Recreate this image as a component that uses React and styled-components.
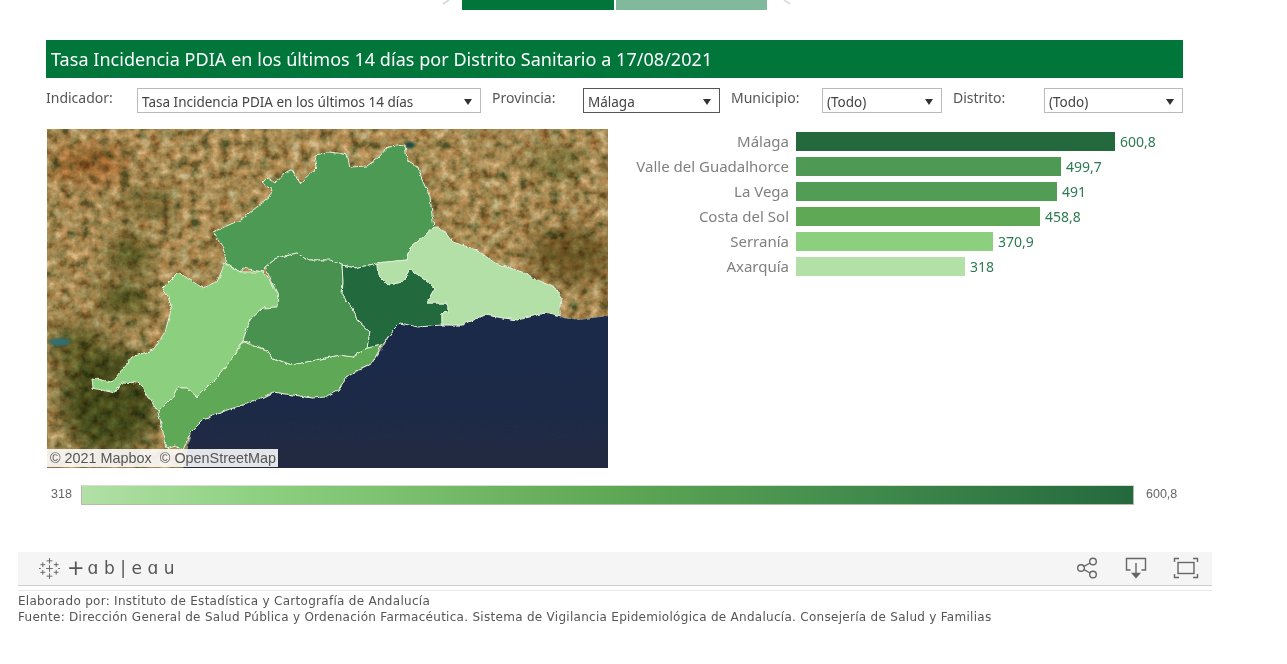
import React from "react";
import styled, { createGlobalStyle } from "styled-components";

const bars = [
  { name: "Málaga", value: "600,8", width: 319, color: "#24693d" },
  { name: "Valle del Guadalhorce", value: "499,7", width: 265, color: "#4e9a55" },
  { name: "La Vega", value: "491", width: 261, color: "#529d55" },
  { name: "Costa del Sol", value: "458,8", width: 244, color: "#5fa855" },
  { name: "Serranía", value: "370,9", width: 197, color: "#8bcf7f" },
  { name: "Axarquía", value: "318", width: 169, color: "#b2e0a6" },
];

const filters = [
  { label: "Indicador:", value: "Tasa Incidencia PDIA en los últimos 14 días", width: 344 },
  { label: "Provincia:", value: "Málaga", width: 137, active: true },
  { label: "Municipio:", value: "(Todo)", width: 120 },
  { label: "Distrito:", value: "(Todo)", width: 139 },
];

const regions = [
  {
    fill: "#4e9a55",
    d: "M213 232L240 220L270 197L272 190L262 183L267 178L275 183L285 172L292 170L300 183L317 167L315 155L328 152L338 153L347 155L350 167L367 166L378 158L388 147L405 145L407 160L418 167L423 182L430 197L432 215L434 227L422 238L411 247L407 260L377 263L355 268L342 265L325 260L307 260L297 253L277 258L265 267L263 272L243 268L240 272L227 263L223 248Z",
  },
  {
    fill: "#8bcf7f",
    d: "M162 288L178 272L190 280L203 288L217 282L225 263L240 272L263 272L273 285L278 295L277 307L263 308L250 320L243 340L232 358L222 372L197 397L187 388L177 388L173 397L158 412L143 388L138 383L122 382L115 393L93 388L92 378L112 382L132 357L153 350L165 332L172 307L167 295Z",
  },
  {
    fill: "#5fa855",
    d: "M243 342L267 350L273 358L292 365L325 358L340 355L353 357L367 348L382 345L372 363L357 370L347 377L338 390L325 397L313 398L273 392L253 402L227 410L203 420L190 433L183 450L175 445L167 448L158 412L173 397L177 388L187 388L197 397L222 372L232 358Z",
  },
  {
    fill: "#4a9150",
    d: "M243 340L250 320L263 308L277 307L278 295L273 285L265 267L277 258L297 253L307 260L330 260L342 265L343 282L342 295L353 308L357 320L370 332L367 348L353 357L340 355L325 358L292 365L273 358L267 350Z",
  },
  {
    fill: "#24693d",
    d: "M342 265L355 268L377 263L378 275L388 285L402 282L410 269L425 280L435 288L428 300L427 303L448 303L448 312L442 313L442 325L418 327L400 323L393 330L382 345L367 348L370 332L357 320L353 308L342 295L343 282Z",
  },
  {
    fill: "#b2e0a6",
    d: "M377 263L407 260L411 247L422 238L434 227L440 227L453 242L477 250L495 263L522 272L538 280L555 288L562 300L560 305L560 317L545 313L517 320L485 315L462 325L442 325L442 313L448 312L448 303L427 303L428 300L435 288L425 280L410 269L402 282L388 285L378 275Z",
  },
];

const seaPath =
  "M183 472L190 433L203 420L227 410L253 402L273 392L313 398L338 390L347 377L372 363L393 330L400 323L442 325L462 325L485 315L517 320L545 313L575 320L612 315L612 472Z";

const App = () => {
  return (
    <>
      <GlobalStyle />
      <Page>
        <TabRow>
          <Chevron viewBox="0 0 10 6">
            <path d="M8 0L2 4" />
          </Chevron>
          <Tab $color="#00763a" />
          <Tab $color="#80b99b" />
          <Chevron viewBox="0 0 10 6">
            <path d="M2 0L8 4" />
          </Chevron>
        </TabRow>
        <Dashboard>
          <Title>Tasa Incidencia PDIA en los últimos 14 días por Distrito Sanitario a 17/08/2021</Title>
          <FilterRow>
            {filters.map((f) => (
              <React.Fragment key={f.label}>
                <FilterLabel>{f.label}</FilterLabel>
                <Select $width={f.width} $active={f.active}>
                  <span>{f.value}</span>
                  <Caret />
                </Select>
              </React.Fragment>
            ))}
          </FilterRow>
          <Content>
            <MapFrame>
              <MapSvg viewBox="47 129 561 339">
                <defs>
                  <filter id="land" x="0" y="0" width="100%" height="100%" colorInterpolationFilters="sRGB">
                    <feTurbulence type="fractalNoise" baseFrequency="0.1" numOctaves="5" seed="11" />
                    <feColorMatrix values="1.25 0.5 0 0 -0.38 1.6 0.1 0 0 -0.35 1.7 0 0 0 -0.35 0 0 0 0 1" />
                    <feComponentTransfer>
                      <feFuncR type="table" tableValues="0.3 0.46 0.6 0.69 0.77 0.85" />
                      <feFuncG type="table" tableValues="0.32 0.41 0.5 0.56 0.63 0.73" />
                      <feFuncB type="table" tableValues="0.16 0.22 0.29 0.34 0.41 0.54" />
                    </feComponentTransfer>
                    <feGaussianBlur stdDeviation="0.6" />
                  </filter>
                  <filter id="soft" colorInterpolationFilters="sRGB">
                    <feGaussianBlur stdDeviation="10" />
                  </filter>
                  <filter id="edge">
                    <feGaussianBlur stdDeviation="1.2" />
                  </filter>
                  <filter id="wiggle" x="-5%" y="-5%" width="110%" height="110%">
                    <feTurbulence type="fractalNoise" baseFrequency="0.16" numOctaves="3" seed="4" />
                    <feDisplacementMap in="SourceGraphic" scale="4" xChannelSelector="R" yChannelSelector="G" />
                    <feGaussianBlur stdDeviation="0.35" />
                  </filter>
                  <linearGradient id="sea" x1="0" y1="0" x2="0" y2="1">
                    <stop offset="0" stopColor="#1b2b4b" />
                    <stop offset="1" stopColor="#212a42" />
                  </linearGradient>
                </defs>
                <rect x="47" y="129" width="561" height="339" filter="url(#land)" />
                <g filter="url(#soft)" style={{ mixBlendMode: "multiply" }}>
                  <ellipse cx="130" cy="255" rx="24" ry="16" fill="#7d9a5a" />
                  <ellipse cx="125" cy="300" rx="28" ry="16" fill="#7d9a5a" />
                  <ellipse cx="110" cy="400" rx="50" ry="55" fill="#6e8d52" />
                  <ellipse cx="75" cy="345" rx="26" ry="22" fill="#8ca268" />
                  <ellipse cx="150" cy="205" rx="32" ry="12" fill="#a4b080" />
                  <ellipse cx="570" cy="255" rx="42" ry="30" fill="#aaa678" />
                  <ellipse cx="90" cy="165" rx="40" ry="18" fill="#e8b888" />
                  <ellipse cx="555" cy="165" rx="26" ry="14" fill="#b0c8a0" />
                </g>
                <ellipse cx="60" cy="342" rx="11" ry="4" fill="#356e6e" filter="url(#edge)" />
                <ellipse cx="410" cy="145" rx="5" ry="3" fill="#1e4a44" filter="url(#edge)" />
                <g filter="url(#wiggle)">
                  <path d={seaPath} fill="url(#sea)" stroke="#8f9a92" strokeWidth="0.8" />
                  {regions.map((r) => (
                    <path key={r.fill} d={r.d} fill={r.fill} stroke="#e4efdc" strokeWidth="1" strokeLinejoin="round" />
                  ))}
                </g>
              </MapSvg>
              <Attribution>© 2021 Mapbox&nbsp; © OpenStreetMap</Attribution>
            </MapFrame>
            <Chart>
              {bars.map((b) => (
                <BarRow key={b.name}>
                  <BarName>{b.name}</BarName>
                  <Bar $color={b.color} style={{ width: b.width }} />
                  <BarValue>{b.value}</BarValue>
                </BarRow>
              ))}
            </Chart>
          </Content>
          <Legend>
            <LegendMin>318</LegendMin>
            <LegendRamp />
            <LegendMax>600,8</LegendMax>
          </Legend>
        </Dashboard>
        <Toolbar>
          <Logo>
            <LogoMark viewBox="0 0 24 24">
              <path d="M12 1v6M9 4h6M12 17v6M9 20h6M5 5.500v5M2.500 8h5M19 5.500v5M16.500 8h5M5 13.500v5M2.500 16h5M19 13.500v5M16.500 16h5M12 8.500v7M8.500 12h7M1 12h2M21 12h2" />
            </LogoMark>
            <LogoText>
              <LogoPlus>+</LogoPlus>ɑb|eɑu
            </LogoText>
          </Logo>
          <ToolIcons>
            <ToolIcon viewBox="0 0 24 24" $size={24}>
              <circle cx="18" cy="5.500" r="3.300" />
              <circle cx="6" cy="12" r="3.300" />
              <circle cx="18" cy="18.500" r="3.300" />
              <path d="M9 10.300L15.100 7M9 13.700L15.100 17" />
            </ToolIcon>
            <ToolIcon viewBox="0 0 24 24" $size={24}>
              <path d="M6.500 14H2.500V2.500H21.500V14H17.500M12 7V18" />
              <path d="M8.500 17.500H15.500L12 21.500Z" fill="#666" />
            </ToolIcon>
            <ToolIcon viewBox="0 0 26 24" $size={26}>
              <rect x="5" y="6.500" width="16" height="11" />
              <path d="M1.500 6V2.500H6M20 2.500H24.500V6M1.500 18V21.500H6M20 21.500H24.500V18" />
            </ToolIcon>
          </ToolIcons>
        </Toolbar>
        <ToolbarRule />
        <Credits>
          <div>Elaborado por: Instituto de Estadística y Cartografía de Andalucía</div>
          <div>Fuente: Dirección General de Salud Pública y Ordenación Farmacéutica. Sistema de Vigilancia Epidemiológica de Andalucía. Consejería de Salud y Familias</div>
        </Credits>
      </Page>
    </>
  );
};

export default App;

const GlobalStyle = createGlobalStyle`
  html, body {
    margin: 0;
    padding: 0;
    background: #fff;
  }
`;

const bookFont = `"Noto Sans", "Open Sans", sans-serif`;

const Page = styled.div`
  width: 1287px;
  height: 664px;
  overflow: hidden;
  font-family: ${bookFont};
`;

const TabRow = styled.div`
  display: flex;
  align-items: flex-start;
  height: 10px;
  padding-left: 439px;
`;

const Tab = styled.div`
  width: 151px;
  height: 10px;
  margin-right: 2px;
  background: ${(p) => p.$color};

  &:nth-child(2) {
    width: 152px;
  }
`;

const Chevron = styled.svg`
  width: 14px;
  height: 6px;
  margin-right: 9px;
  fill: none;
  stroke: #dcdcdc;
  stroke-width: 2;

  &:last-child {
    margin: 0 0 0 11px;
  }
`;

const Dashboard = styled.div`
  width: 1137px;
  margin: 30px 0 0 46px;
`;

const Title = styled.div`
  height: 38px;
  padding-left: 5px;
  background: #00763a;
  color: #fff;
  font-size: 18px;
  letter-spacing: 0.04px;
  line-height: 39px;
  white-space: nowrap;
`;

const FilterRow = styled.div`
  display: flex;
  align-items: flex-start;
  margin-top: 10px;
`;

const FilterLabel = styled.div`
  width: 91px;
  margin-left: 11px;
  color: #555;
  font-size: 14px;
  line-height: 20px;

  &:first-child {
    margin-left: 0;
  }
`;

const Select = styled.div`
  display: flex;
  align-items: center;
  justify-content: space-between;
  box-sizing: border-box;
  width: ${(p) => p.$width}px;
  height: 25px;
  padding: 2px 8px 0 4px;
  border: 1px solid ${(p) => (p.$active ? "#555" : "#bbb")};
  background: #fff;
  color: #444;
  font-size: 13.5px;
  white-space: nowrap;
`;

const Caret = styled.i`
  width: 0;
  height: 0;
  border-left: 4px solid transparent;
  border-right: 4px solid transparent;
  border-top: 6px solid #333;
`;

const Content = styled.div`
  display: flex;
  margin-top: 16px;
`;

const MapFrame = styled.div`
  position: relative;
  flex: none;
  box-sizing: border-box;
  width: 563px;
  height: 340px;
  padding: 0 1px;
`;

const MapSvg = styled.svg`
  display: block;
  width: 561px;
  height: 339px;
`;

const Attribution = styled.div`
  position: absolute;
  left: 1px;
  bottom: 2px;
  padding: 0 2px 0 3px;
  background: rgba(255, 255, 255, 0.88);
  color: #555;
  font-family: "Liberation Sans", Arial, sans-serif;
  font-size: 14.4px;
  line-height: 18px;
  white-space: nowrap;
`;

const Chart = styled.div`
  display: flex;
  flex-direction: column;
  gap: 6px;
  padding-top: 3px;
`;

const BarRow = styled.div`
  display: flex;
  align-items: center;
  height: 19px;
`;

const BarName = styled.div`
  width: 180px;
  margin-right: 7px;
  padding-bottom: 1px;
  color: #808080;
  font-size: 15px;
  line-height: 19px;
  text-align: right;
  white-space: nowrap;
`;

const Bar = styled.div`
  height: 19px;
  background: ${(p) => p.$color};
`;

const BarValue = styled.div`
  margin-left: 5px;
  color: #2b7a50;
  font-size: 14px;
`;

const Legend = styled.div`
  display: flex;
  align-items: center;
  margin-top: 16px;
  font-family: "Liberation Sans", Arial, sans-serif;
  font-size: 12.5px;
  color: #666;
`;

const LegendMin = styled.div`
  box-sizing: border-box;
  width: 35px;
  padding: 0 0 3px 5px;
`;

const LegendRamp = styled.div`
  box-sizing: border-box;
  width: 1053px;
  height: 20px;
  border: 1px solid #b5bdaa;
  border-top-color: #d7dfcf;
  background: linear-gradient(90deg, #b2e0a6 0%, #8bcf7f 18%, #5fa855 50%, #3f8a4c 75%, #24693d 100%);
`;

const LegendMax = styled.div`
  margin-left: 12px;
  padding-bottom: 3px;
`;

const Toolbar = styled.div`
  display: flex;
  align-items: center;
  justify-content: space-between;
  box-sizing: border-box;
  width: 1194px;
  height: 34px;
  margin: 47px 0 0 18px;
  padding: 0 13px 1px 20px;
  background: #f5f5f5;
  border-bottom: 1px solid #d0d0d0;
`;

const Logo = styled.div`
  display: flex;
  align-items: center;
  gap: 6px;
`;

const LogoMark = styled.svg`
  width: 23px;
  height: 23px;
  fill: none;
  stroke: #666;
  stroke-width: 1;
`;

const LogoText = styled.div`
  display: flex;
  align-items: center;
  color: #555;
  font-family: "DejaVu Sans", sans-serif;
  font-size: 17px;
  letter-spacing: 5.5px;
`;

const LogoPlus = styled.span`
  font-size: 21px;
  line-height: 20px;
  letter-spacing: 3px;
`;

const ToolIcons = styled.div`
  display: flex;
  align-items: center;
  gap: 25px;
`;

const ToolIcon = styled.svg`
  width: ${(p) => p.$size}px;
  height: 24px;
  fill: none;
  stroke: #666;
  stroke-width: 1.4;
`;

const ToolbarRule = styled.div`
  width: 1194px;
  height: 1px;
  margin: 4px 0 0 18px;
  background: #e8e8e8;
`;

const Credits = styled.div`
  margin: 2px 0 0 18px;
  color: #555;
  font-family: "DejaVu Sans", Verdana, sans-serif;
  font-size: 12px;
  letter-spacing: 0.285px;
  line-height: 16px;
  white-space: nowrap;
`;
